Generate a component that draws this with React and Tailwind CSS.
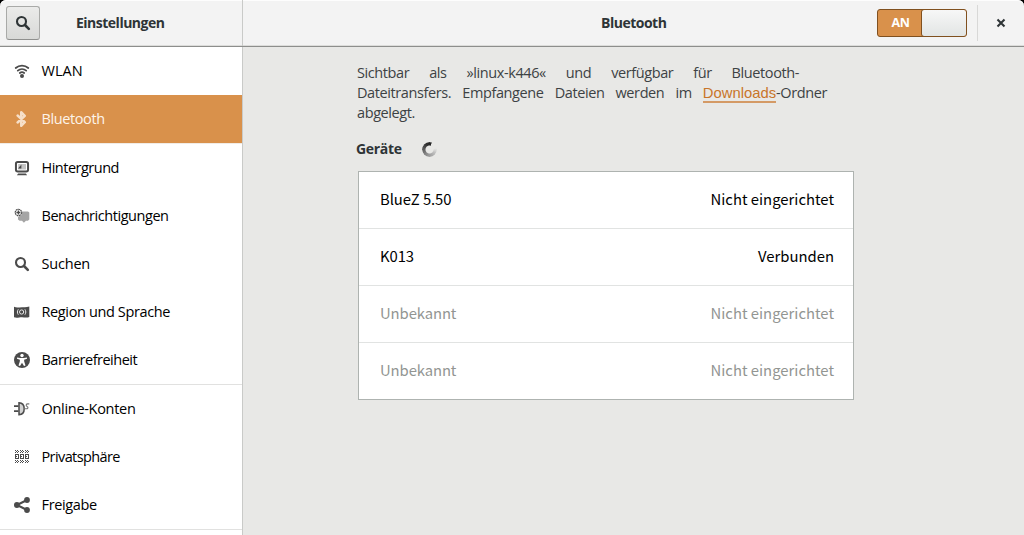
import React from "react";

function Icon({ children, className = "size-4" }) {
  return (
    <svg viewBox="0 0 16 16" fill="currentColor" className={`shrink-0 ${className}`}>
      {children}
    </svg>
  );
}

const SearchIcon = (props) => (
  <Icon {...props}>
    <circle cx="6.5" cy="6.5" r="4.5" fill="none" stroke="currentColor" strokeWidth="2.1" />
    <path d="m10 10 3.8 3.8" fill="none" stroke="currentColor" strokeWidth="2.6" strokeLinecap="round" />
  </Icon>
);

const WifiIcon = () => (
  <Icon>
    <g fill="none" stroke="currentColor" strokeWidth="1.8" strokeLinecap="round">
      <path d="M1.7 5C5.3 1.8 10.7 1.8 14.3 5" />
      <path d="M3.8 7.6c2.4-2.1 6-2.1 8.4 0" />
      <path d="M5.8 10c1.3-1 3.1-1 4.4 0" />
    </g>
    <circle cx="8" cy="13" r="2" />
  </Icon>
);

const BluetoothIcon = () => (
  <Icon>
    <path
      d="M3.6 4.5 10.8 11.200 7.200 14.800V1.200l3.600 3.600L3.600 11.500"
      fill="none"
      stroke="currentColor"
      strokeWidth="2.4"
      strokeLinejoin="round"
      strokeLinecap="round"
    />
  </Icon>
);

const BackgroundIcon = () => (
  <Icon>
    <rect x="1.950" y="1.950" width="12.100" height="9.600" rx="1.800" fill="#fff" stroke="currentColor" strokeWidth="2" />
    <rect x="4.200" y="4" width="7.800" height="5.500" fill="#c4c4c4" />
    <path d="M4 8.500 7.400 4.500v4H4z" />
    <path d="M4.200 13.400h7.600l1.300 1.900H2.900z" />
  </Icon>
);

const NotificationIcon = () => (
  <Icon>
    <path d="M7.500 3.400H14l1.300 1.200v7l-1.400 1.200h-2l-2 1.900-1.900-1.900H5.600L4 11.500V8.900l3.500-1.800z" fill="#a5a5a5" />
    <circle cx="4.400" cy="4.500" r="3.200" fill="#fff" stroke="currentColor" strokeWidth="1.100" strokeDasharray="1.900 .5" />
    <path d="M4.400 2.500v4M2.400 4.500h4" fill="none" stroke="currentColor" strokeWidth="1.300" />
  </Icon>
);

const RegionIcon = () => (
  <Icon>
    <path d="M0 2.800c3 1.500 5 .4 8 .4 2.600 0 4.500.3 7.300-.6v10.400c-2.800 1-5 .2-7.300.2-3 0-5 1.200-8 .1z" />
    <g fill="none" stroke="#e8e8e8" strokeWidth="1">
      <circle cx="7.600" cy="8" r="2.100" />
      <path d="M4.300 5.300c-1.200 1.600-1.200 3.800 0 5.400M10.900 5.300c1.200 1.600 1.200 3.800 0 5.400" />
    </g>
  </Icon>
);

const AccessIcon = () => (
  <Icon>
    <circle cx="8" cy="8" r="8" />
    <circle cx="8" cy="3.500" r="1.700" fill="#fff" />
    <path d="m3 5.500 3.200.4h3.600L13 5.500v1.300l-2.900 1 .1 1.800 1.300 4-1.500.5L8 10.700 6 14.100l-1.500-.5 1.300-4 .1-1.800L3 6.800z" fill="#fff" />
  </Icon>
);

const OnlineIcon = () => (
  <Icon>
    <path d="M0 4.200h4.500V6H0zM0 9.300h4.500v1.800H0z" />
    <path d="M5 1.700c3.500.1 5.200 2.500 5.200 6s-1.700 5.900-5.200 6z" fill="#d2d2d2" stroke="currentColor" strokeWidth="1.500" />
    <path d="M10.200 7.800h1.600c2.500 0 2.700-1.500 1.300-2.300-1.500-.8-1.100-2.600.6-2.600h1.600" fill="none" stroke="#777" strokeWidth="1.100" />
  </Icon>
);

const PrivacyIcon = () => (
  <Icon>
    {[1, 6, 11].map((x) => (
      <g key={x} shapeRendering="crispEdges">
        {[2, 12].map((y) => (
          <path
            key={y}
            d={`M${x} ${y - 1}h1v1h-1zM${x + 2} ${y - 1}h1v1h-1zM${x + 1} ${y}h1v1h-1zM${x + 3} ${y}h1v1h-1zM${x} ${y + 1}h1v1h-1zM${x + 2} ${y + 1}h1v1h-1z`}
          />
        ))}
        <path fillRule="evenodd" d={`M${x} 5h4v5h-4zM${x + 1} 6v3h2v-3z`} />
        <path d={`M${x + 1} 7h1v1h-1z`} />
      </g>
    ))}
  </Icon>
);

const ShareIcon = () => (
  <Icon>
    <path d="M13 3 3 8l10 5" fill="none" stroke="currentColor" strokeWidth="2.100" />
    <circle cx="2.900" cy="8" r="2.900" />
    <circle cx="13" cy="3" r="2.900" />
    <circle cx="13" cy="13" r="2.900" />
  </Icon>
);

const groups = [
  [
    { icon: WifiIcon, label: "WLAN", tracking: "tracking-normal" },
    { icon: BluetoothIcon, label: "Bluetooth", tracking: "tracking-[-0.4px]", active: true },
    { icon: BackgroundIcon, label: "Hintergrund", tracking: "tracking-[-0.5px]" },
    { icon: NotificationIcon, label: "Benachrichtigungen", tracking: "tracking-[-0.45px]" },
    { icon: SearchIcon, label: "Suchen", tracking: "tracking-[-0.2px]" },
    { icon: RegionIcon, label: "Region und Sprache", tracking: "tracking-[-0.37px]" },
    { icon: AccessIcon, label: "Barrierefreiheit", tracking: "tracking-[-0.5px]" },
  ],
  [
    { icon: OnlineIcon, label: "Online-Konten", tracking: "tracking-[-0.3px]" },
    { icon: PrivacyIcon, label: "Privatsphäre", tracking: "tracking-[-0.6px]" },
    { icon: ShareIcon, label: "Freigabe", tracking: "tracking-[-0.35px]" },
  ],
];

const devices = [
  ["BlueZ 5.50", "Nicht eingerichtet", true],
  ["K013", "Verbunden", true],
  ["Unbekannt", "Nicht eingerichtet", false],
  ["Unbekannt", "Nicht eingerichtet", false],
];

function SidebarItem({ icon: Glyph, label, tracking, active }) {
  return (
    <li
      className={
        active
          ? "box-content flex h-12 items-center gap-[11px] border-b border-[#f1ece6] bg-[#d9914b] pl-3.5 text-[#fdf4ea]"
          : "flex h-12 items-center gap-[11px] pl-3.5 text-black"
      }
    >
      <span className={active ? "text-[#f6dfc8]" : "text-[#4b4b4b]"}>
        <Glyph />
      </span>
      <span className={`pl-[0.5px] ${tracking}`}>{label}</span>
    </li>
  );
}

function Header() {
  return (
    <header className="flex h-[47px] shrink-0 rounded-t-[6px] border-b border-[#8d8e8c] bg-[#f3f3f3] font-bold tracking-[-0.5px] text-[#2e3436] shadow-[inset_0_1px_0_#fdfdfd,inset_0_-1px_0_#dcdcda]">
      <div className="flex w-[243px] items-center border-r border-[#c9cac8] pl-1.5">
        <button className="flex size-[34px] items-center justify-center rounded-[3px] border border-[#a9aaa8] border-b-[#8f908e] bg-linear-to-b from-[#ebebea] to-[#d8d9d7]">
          <SearchIcon className="size-4" />
        </button>
        <h1 className="ml-9 text-[14px]">Einstellungen</h1>
      </div>
      <div className="flex flex-1 items-center">
        <h2 className="ml-[358px] flex-1 text-[14px]">Bluetooth</h2>
        <button className="flex h-7 w-[90px] overflow-hidden rounded-[3px] border border-[#80501f] bg-[#d9914b] text-[12.5px] tracking-[-0.3px] text-white">
          <span className="flex w-[43px] items-center justify-center pl-0.5">AN</span>
          <span className="-my-px -mr-px flex-1 rounded-[3px] border border-[#80501f] bg-linear-to-b from-[#f7f7f7] to-[#e2e5e4]" />
        </button>
        <span className="ml-[10px] h-9 w-px bg-[#d8d8d7]" />
        <button className="flex w-[46px] justify-center">
          <svg viewBox="0 0 10 10" className="size-2.5">
            <path d="m1.500 1.500 7 7m0-7-7 7" fill="none" stroke="#2e3436" strokeWidth="2.100" />
          </svg>
        </button>
      </div>
    </header>
  );
}

export default function App() {
  return (
    <div className="flex h-[535px] w-[1024px] flex-col overflow-hidden bg-black font-['Open_Sans',sans-serif] text-[14.5px] leading-5">
      <Header />
      <div className="flex min-h-0 flex-1">
        <nav className="w-[243px] shrink-0 border-r border-[#c9cac8] bg-white">
          {groups.map((items, i) => (
            <ul key={i} className="border-b border-[#e1e1e0]">
              {items.map((item) => (
                <SidebarItem key={item.label} {...item} />
              ))}
            </ul>
          ))}
        </nav>
        <main className="flex-1 bg-[#e8e8e6] pt-4 pl-[115px] text-[#3d4244]">
          <div className="-ml-px tracking-[-0.4px]">
            <p className="flex w-[442px] justify-between">
              {"Sichtbar als »linux-k446« und verfügbar für Bluetooth-".split(" ").map((w) => (
                <span key={w}>{w}</span>
              ))}
            </p>
            <p className="flex w-[470px] justify-between">
              {"Dateitransfers. Empfangene Dateien werden im".split(" ").map((w) => (
                <span key={w}>{w}</span>
              ))}
              <span>
                <a className="border-b-2 border-[#d49a66] font-['Liberation_Sans',sans-serif] text-[14.8px] tracking-normal text-[#c8752a]">Downloads</a>-Ordner
              </span>
            </p>
            <p>abgelegt.</p>
          </div>
          <div className="mt-4 -ml-0.5 flex items-center gap-5">
            <h3 className="w-[46px] text-[14px] font-bold tracking-[-0.3px] text-[#2e3436]">Geräte</h3>
            <span className="size-[15px] rounded-full bg-[conic-gradient(from_20deg,#e8e8e6_0%,#e8e8e6_16%,#bbb_30%,#888_55%,#333_85%,#222_99%,#e8e8e6_100%)] mask-[radial-gradient(circle,transparent_3.5px,black_4.5px)]" />
          </div>
          <ul className="mt-3 w-[496px] border border-[#aeb3b0] bg-white font-['Noto_Sans_CJK_SC',sans-serif] text-[14.85px]">
            {devices.map(([name, status, known], i) => (
              <li
                key={i}
                className={`flex h-[57px] items-center justify-between border-b border-[#e1e3e2] pr-[19px] pb-[2px] pl-[21px] last:h-14 last:border-b-0 ${known ? "text-black" : "text-[#929592]"}`}
              >
                <span className="tracking-[-0.1px]">{name}</span>
                <span>{status}</span>
              </li>
            ))}
          </ul>
        </main>
      </div>
    </div>
  );
}
